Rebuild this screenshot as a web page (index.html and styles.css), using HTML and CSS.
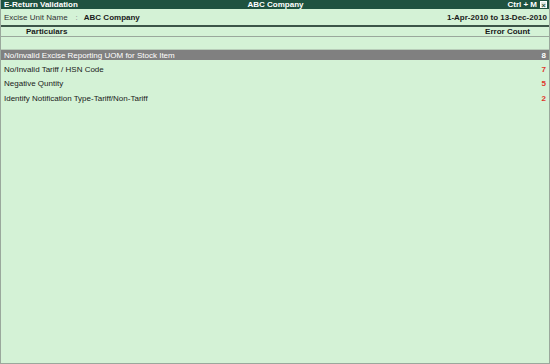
FILE: index.html
```html
<!DOCTYPE html>
<html lang="en">
<head>
  <meta charset="UTF-8">
  <title>E-Return Validation</title>
  <link rel="stylesheet" href="styles.css">
</head>
<body>
  <div class="window">
    <header class="titlebar">
      <span class="title-left">E-Return Validation</span>
      <span class="title-center">ABC Company</span>
      <span class="title-right">Ctrl + M <span class="close-box">&#215;</span></span>
    </header>

    <div class="info-row">
      <span class="label">Excise Unit Name</span>
      <span class="colon">:</span>
      <span class="company">ABC Company</span>
      <span class="period">1-Apr-2010 to 13-Dec-2010</span>
    </div>

    <div class="col-head">
      <span class="head-particulars">Particulars</span>
      <span class="head-count">Error Count</span>
    </div>
    <div class="spacer-row"></div>

    <div class="rows">
      <div class="row selected"><span>No/Invalid Excise Reporting UOM for Stock Item</span><span class="count">8</span></div>
      <div class="row"><span>No/Invalid Tariff / HSN Code</span><span class="count">7</span></div>
      <div class="row"><span>Negative Quntity</span><span class="count">5</span></div>
      <div class="row"><span>Identify Notification Type-Tariff/Non-Tariff</span><span class="count">2</span></div>
    </div>
  </div>
</body>
</html>
```

FILE: styles.css
```css
body {
  margin: 0;
  font-family: "Liberation Sans", Arial, sans-serif;
  font-size: 8px;
  color: #1a1a1a;
  background: #d4f2d6;
}

.window {
  box-sizing: border-box;
  width: 550px;
  height: 364px;
  background: #d4f2d6;
  border: 1px solid #9aa89c;
  border-top: none;
}

.titlebar {
  display: flex;
  align-items: center;
  height: 9px;
  padding: 0 2px 0 3px;
  background: #1f5240;
  color: #fff;
  font-weight: bold;
}

.title-left,
.title-right {
  flex: 1;
}

.title-right {
  display: flex;
  justify-content: flex-end;
  align-items: center;
  gap: 3px;
}

.close-box {
  display: inline-block;
  width: 7px;
  height: 7px;
  line-height: 7px;
  font-size: 7px;
  text-align: center;
  background: #dfe8e2;
  color: #1f5240;
  border: 1px solid #fff;
  box-sizing: border-box;
}

.info-row {
  display: flex;
  align-items: center;
  height: 16px;
  padding: 0 2px 0 3px;
  border-bottom: 2px solid #3c5548;
}

.label {
  color: #333;
}

.colon {
  color: #888;
  margin: 0 6px 0 8px;
}

.company {
  font-weight: bold;
}

.period {
  margin-left: auto;
  font-weight: bold;
}

.col-head {
  display: flex;
  justify-content: space-between;
  align-items: center;
  height: 9px;
  padding: 0 19px 0 25px;
  font-weight: bold;
  border-bottom: 1px solid #9aa89c;
}

.spacer-row {
  height: 12px;
  border-bottom: 1px solid #b8ccb9;
}

.rows {
  display: flex;
  flex-direction: column;
}

.row {
  display: flex;
  justify-content: space-between;
  align-items: center;
  height: 10px;
  margin-bottom: 4.4px;
  padding: 0 3px;
}

.row.selected {
  background: #808080;
  color: #fff;
}

.count {
  font-weight: bold;
  color: #e0352b;
}

.row.selected .count {
  color: #fff;
}
```
